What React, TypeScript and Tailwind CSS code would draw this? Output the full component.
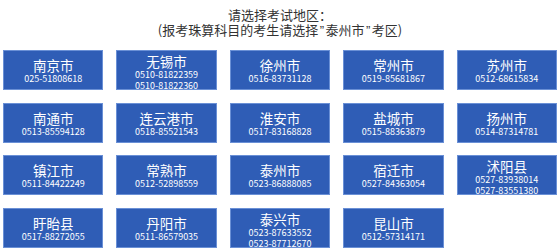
const regions = [
  { name: '南京市', phones: ['025-51808618'] },
  { name: '无锡市', phones: ['0510-81822359', '0510-81822360'] },
  { name: '徐州市', phones: ['0516-83731128'] },
  { name: '常州市', phones: ['0519-85681867'] },
  { name: '苏州市', phones: ['0512-68615834'] },
  { name: '南通市', phones: ['0513-85594128'] },
  { name: '连云港市', phones: ['0518-85521543'] },
  { name: '淮安市', phones: ['0517-83168828'] },
  { name: '盐城市', phones: ['0515-88363879'] },
  { name: '扬州市', phones: ['0514-87314781'] },
  { name: '镇江市', phones: ['0511-84422249'] },
  { name: '常熟市', phones: ['0512-52898559'] },
  { name: '泰州市', phones: ['0523-86888085'] },
  { name: '宿迁市', phones: ['0527-84363054'] },
  { name: '沭阳县', phones: ['0527-83938014', '0527-83551380'] },
  { name: '盱眙县', phones: ['0517-88272055'] },
  { name: '丹阳市', phones: ['0511-86579035'] },
  { name: '泰兴市', phones: ['0523-87633552', '0523-87712670'] },
  { name: '昆山市', phones: ['0512-57314171'] },
]

function Quote() {
  return <span className="px-[1.5px] font-['Liberation_Sans']">”</span>
}

export default function App() {
  return (
    <div
      className="w-[560px] h-[250px] bg-white overflow-hidden"
      style={{ fontFamily: '"Noto Sans CJK SC", "Noto Sans", sans-serif' }}
    >
      <div className="pt-[7px] text-center text-[13px] leading-[15px] text-[#333333]">
        <div>请选择考试地区：</div>
        <div>
          (报考珠算科目的考生请选择<Quote />泰州市<Quote />考区)
        </div>
      </div>

      <div className="mt-[12px] px-[3px] grid grid-cols-5 gap-x-[13px] gap-y-[12.7px]">
        {regions.map((r) => {
          const two = r.phones.length > 1
          return (
            <div
              key={r.name}
              className={
                two
                  ? 'h-[40px] pt-[3px] flex flex-col items-center bg-[#2f5db6] border border-[#6a90d6] text-white'
                  : 'h-[40px] pt-[7px] flex flex-col items-center bg-[#2f5db6] border border-[#6a90d6] text-white'
              }
            >
              <div className="text-[13.5px] leading-[15px]">{r.name}</div>
              {r.phones.map((p) => (
                <div key={p} className={two ? 'text-[9px] leading-[11px]' : 'text-[9px] leading-[12px]'}>
                  {p}
                </div>
              ))}
            </div>
          )
        })}
      </div>
    </div>
  )
}
